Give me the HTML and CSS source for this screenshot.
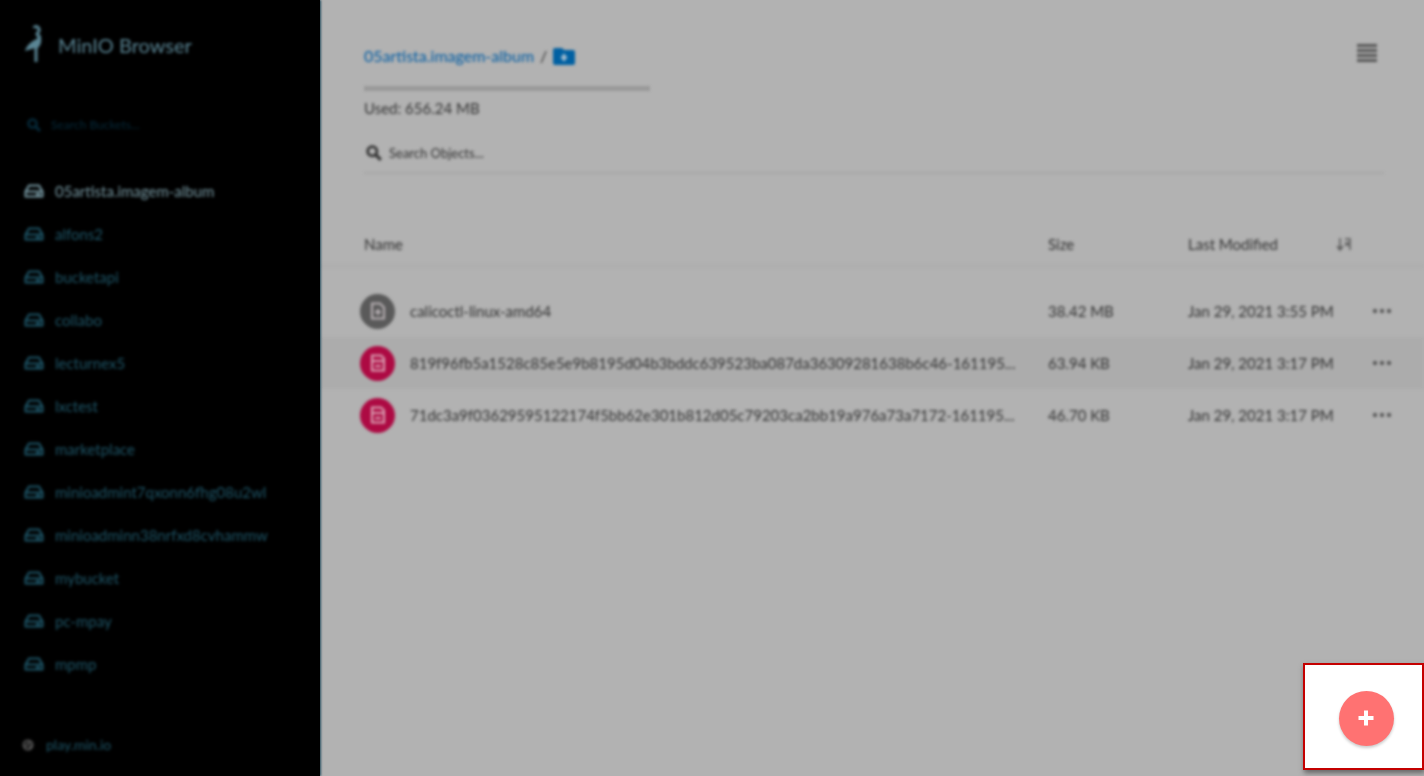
FILE: index.html
```html
<!DOCTYPE html>
<html lang="en">
<head>
<meta charset="utf-8">
<title>MinIO Browser</title>
<link rel="stylesheet" href="styles.css">
</head>
<body>
<svg class="defs" aria-hidden="true">
  <symbol id="drive" viewBox="0 0 20 14"><path d="M5 1.5h10l3.5 6v5h-17v-5zM1.5 7.5h17M12 10.2h4" fill="none" stroke="currentColor" stroke-width="2" stroke-linejoin="round"/></symbol>
  <symbol id="search" viewBox="0 0 16 16"><circle cx="6.3" cy="6.3" r="4.6" fill="none" stroke="currentColor" stroke-width="2.8"/><path d="M9.8 9.8l5 5" stroke="currentColor" stroke-width="3.2"/></symbol>
  <symbol id="doc" viewBox="0 0 16 18"><path d="M2 1.5h9l3 3v12H2zM3 7h10M5 12h6" fill="none" stroke="currentColor" stroke-width="2"/></symbol>
  <symbol id="bin" viewBox="0 0 16 18"><path d="M2 1.5h8l4 4v11H2z" fill="none" stroke="currentColor" stroke-width="2"/><path d="M8 7v6M5 10h6" stroke="currentColor" stroke-width="2"/></symbol>
</svg>
<div class="app">
  <aside class="sidebar">
    <header class="brand">
      <svg class="brand-mark" viewBox="0 0 20 38"><path d="M10 4c1-3 6-1 5 3l-2 3c4 5 3 10-1 14v14" fill="none" stroke="currentColor" stroke-width="3"/><path d="M16 10c3 6 0 12-5 14-3 1-7 2-10 3 2-7 8-10 13-13" fill="currentColor"/></svg>
      <h1>MinIO Browser</h1>
    </header>
    <label class="bucket-search"><svg class="search-icon"><use href="#search"/></svg><input type="text" placeholder="Search Buckets..." aria-label="Search Buckets"></label>
    <nav class="buckets">
      <a class="active" href="#"><svg><use href="#drive"/></svg>05artista.imagem-album</a>
      <a href="#"><svg><use href="#drive"/></svg>alfons2</a>
      <a href="#"><svg><use href="#drive"/></svg>bucketapi</a>
      <a href="#"><svg><use href="#drive"/></svg>collabo</a>
      <a href="#"><svg><use href="#drive"/></svg>lecturnex5</a>
      <a href="#"><svg><use href="#drive"/></svg>lxctest</a>
      <a href="#"><svg><use href="#drive"/></svg>marketplace</a>
      <a href="#"><svg><use href="#drive"/></svg>minioadmint7qxonn6fhg08u2wl</a>
      <a href="#"><svg><use href="#drive"/></svg>minioadminn38nrfxd8cvhammw</a>
      <a href="#"><svg><use href="#drive"/></svg>mybucket</a>
      <a href="#"><svg><use href="#drive"/></svg>pc-mpay</a>
      <a href="#"><svg><use href="#drive"/></svg>mpmp</a>
    </nav>
    <a class="host" href="#"><svg viewBox="0 0 12 12"><circle cx="6" cy="6" r="4.5" fill="none" stroke="currentColor" stroke-width="2"/><path d="M3 8l5-5M7 9l3-3" stroke="currentColor" stroke-width="2"/></svg>play.min.io</a>
  </aside>
  <main class="content">
    <header class="top">
      <div class="summary">
        <div class="crumbs"><a href="#">05artista.imagem-album</a><span>/</span>
          <button class="new-path" aria-label="Create new path"><svg viewBox="0 0 22 18"><path d="M2 1h7l2 2h9q2 0 2 2v11q0 2-2 2H2q-2 0-2-2V3q0-2 2-2z" fill="currentColor"/><path d="M11 7v7M8 10.500h6" stroke="#a9bfd0" stroke-width="2.500"/></svg></button>
        </div>
        <div class="usage-bar"></div>
        <p class="used">Used: 656.24 MB</p>
      </div>
      <button class="menu" aria-label="Menu"><svg viewBox="0 0 20 20"><path d="M0 2.500h20M0 7.500h20M0 12.500h20M0 17.500h20" stroke="currentColor" stroke-width="3"/></svg></button>
    </header>
    <label class="object-search"><svg class="search-icon"><use href="#search"/></svg><input type="text" placeholder="Search Objects..." aria-label="Search Objects"></label>
    <table class="objects">
      <colgroup><col><col class="c-size"><col class="c-date"><col class="c-act"></colgroup>
      <thead><tr><th>Name</th><th>Size</th><th><div class="sorted">Last Modified<svg viewBox="0 0 14 14"><path d="M3 1v11M0 9l3 4 3-4M8 2h5v4H8M8 8h5v5" fill="none" stroke="currentColor" stroke-width="1.500"/></svg></div></th><th></th></tr></thead>
      <tbody>
        <tr><td><div class="file"><span class="badge"><svg><use href="#bin"/></svg></span><a href="#">calicoctl-linux-amd64</a></div></td><td>38.42 MB</td><td>Jan 29, 2021 3:55 PM</td><td><button class="more" aria-label="Actions"><i></i><i></i><i></i></button></td></tr>
        <tr><td><div class="file"><span class="badge pdf"><svg><use href="#doc"/></svg></span><a href="#">819f96fb5a1528c85e5e9b8195d04b3bddc639523ba087da36309281638b6c46-161195...</a></div></td><td>63.94 KB</td><td>Jan 29, 2021 3:17 PM</td><td><button class="more" aria-label="Actions"><i></i><i></i><i></i></button></td></tr>
        <tr><td><div class="file"><span class="badge pdf"><svg><use href="#doc"/></svg></span><a href="#">71dc3a9f03629595122174f5bb62e301b812d05c79203ca2bb19a976a73a7172-161195...</a></div></td><td>46.70 KB</td><td>Jan 29, 2021 3:17 PM</td><td><button class="more" aria-label="Actions"><i></i><i></i><i></i></button></td></tr>
      </tbody>
    </table>
  </main>
</div>
<div class="spotlight"><button class="add" aria-label="Add"><svg viewBox="0 0 16 16"><path d="M8 0.500v15M0.500 8h15" stroke="#fff" stroke-width="4"/></svg></button></div>
</body>
</html>
```
FILE: styles.css
```css
* { box-sizing: border-box; }
body { margin: 0; background: #b2b2b2; color: #333; font: 15px/20px Lato, sans-serif; overflow: hidden; }
a { color: inherit; text-decoration: none; }
button { border: 0; padding: 0; background: none; color: inherit; display: block; }
input { border: 0; padding: 0; background: none; outline: 0; font: inherit; color: inherit; flex: 1; min-width: 0; }
input::placeholder { color: inherit; opacity: 1; }
svg { display: block; flex: none; }
.defs { position: absolute; width: 0; height: 0; }
.app { display: grid; grid-template-columns: 320px 1fr; min-height: 100vh; }

.sidebar { position: relative; z-index: 1; display: flex; flex-direction: column; background: #000; box-shadow: 1px 0 2px #285060; color: #1e5668; font-size: 15px; padding: 23px 22px 21px 24px; }
.sidebar > * { filter: blur(1.5px); }
.brand { display: flex; align-items: center; gap: 14px; height: 40px; color: #5a8594; }
.brand-mark { width: 20px; height: 38px; }
.brand h1 { margin: 0; padding-top: 4px; font-size: 20px; font-weight: 400; line-height: 24px; }
.search-icon { width: 16px; height: 16px; }
.bucket-search { display: flex; align-items: center; gap: 10px; height: 24px; margin-top: 50px; padding-left: 3px; color: #062b3c; font-size: 12px; }
.bucket-search .search-icon { width: 14px; height: 14px; }
.buckets { margin-top: 32px; }
.buckets a { display: flex; align-items: center; gap: 11px; height: 43px; }
.buckets svg { width: 20px; height: 14px; }
.buckets .active { color: #7899a3; }
.host { display: flex; align-items: center; gap: 12px; margin: auto 0 0 -2px; font-size: 14px; }
.host svg { width: 12px; height: 12px; color: #555; }

.content { padding-top: 42px; }
.content > * { filter: blur(1.5px); }
.top { display: flex; justify-content: space-between; padding: 0 47px 0 44px; }
.summary { width: 286px; }
.crumbs { display: flex; align-items: center; height: 28px; gap: 6px; font-size: 16px; }
.crumbs a { color: #005ca4; }
.new-path { color: #0060a2; }
.new-path svg { width: 22px; height: 18px; }
.usage-bar { height: 5px; margin-top: 16px; background: #999; }
.used { margin: 7px 0 0; }
.menu { height: 22px; color: #555; }
.menu svg { width: 20px; height: 20px; }
.object-search { display: flex; align-items: center; gap: 7px; height: 40px; margin: 16px 40px 0 44px; padding-left: 2px; border-bottom: 2px solid #a9a9a9; font-size: 13px; }

.objects { width: 100%; margin-top: 50px; border-collapse: separate; border-spacing: 0; table-layout: fixed; }
.c-size { width: 140px; }
.c-date { width: 163px; }
.c-act { width: 73px; }
th { height: 44px; padding: 0; border-bottom: 4px solid #aeaeae; text-align: left; font-weight: 400; }
th:first-child { padding-left: 44px; }
.sorted { display: flex; align-items: center; justify-content: space-between; }
.sorted svg { width: 14px; height: 14px; color: #555; }
td { height: 52px; padding: 0; white-space: nowrap; }
td:first-child { padding-left: 40px; }
tbody::before { content: ""; display: block; height: 17px; }
tbody tr:nth-child(2) { background: #acacac; }
.file { display: flex; align-items: center; gap: 15px; }
.badge { display: grid; place-items: center; width: 35px; height: 35px; border-radius: 50%; background: #5a5a5a; color: #b9b2b5; }
.badge.pdf { background: #ad0a43; color: #dca6b7; }
.badge svg { width: 16px; height: 18px; }
.more { display: flex; gap: 3px; margin-left: 22px; }
.more i { width: 4px; height: 4px; border-radius: 50%; background: #484848; }

.spotlight { position: fixed; z-index: 2; right: 0; bottom: 6px; display: grid; place-items: center; width: 121px; height: 107px; border: 2px solid #c40000; background: #fff; box-shadow: 1px 3px 5px #666; padding: 3px 0 0 5px; }
.add { display: grid; place-items: center; width: 55px; height: 55px; border-radius: 50%; background: #ff7272; box-shadow: 0 2px 3px #ccc; }
.add svg { width: 16px; height: 16px; }
```
